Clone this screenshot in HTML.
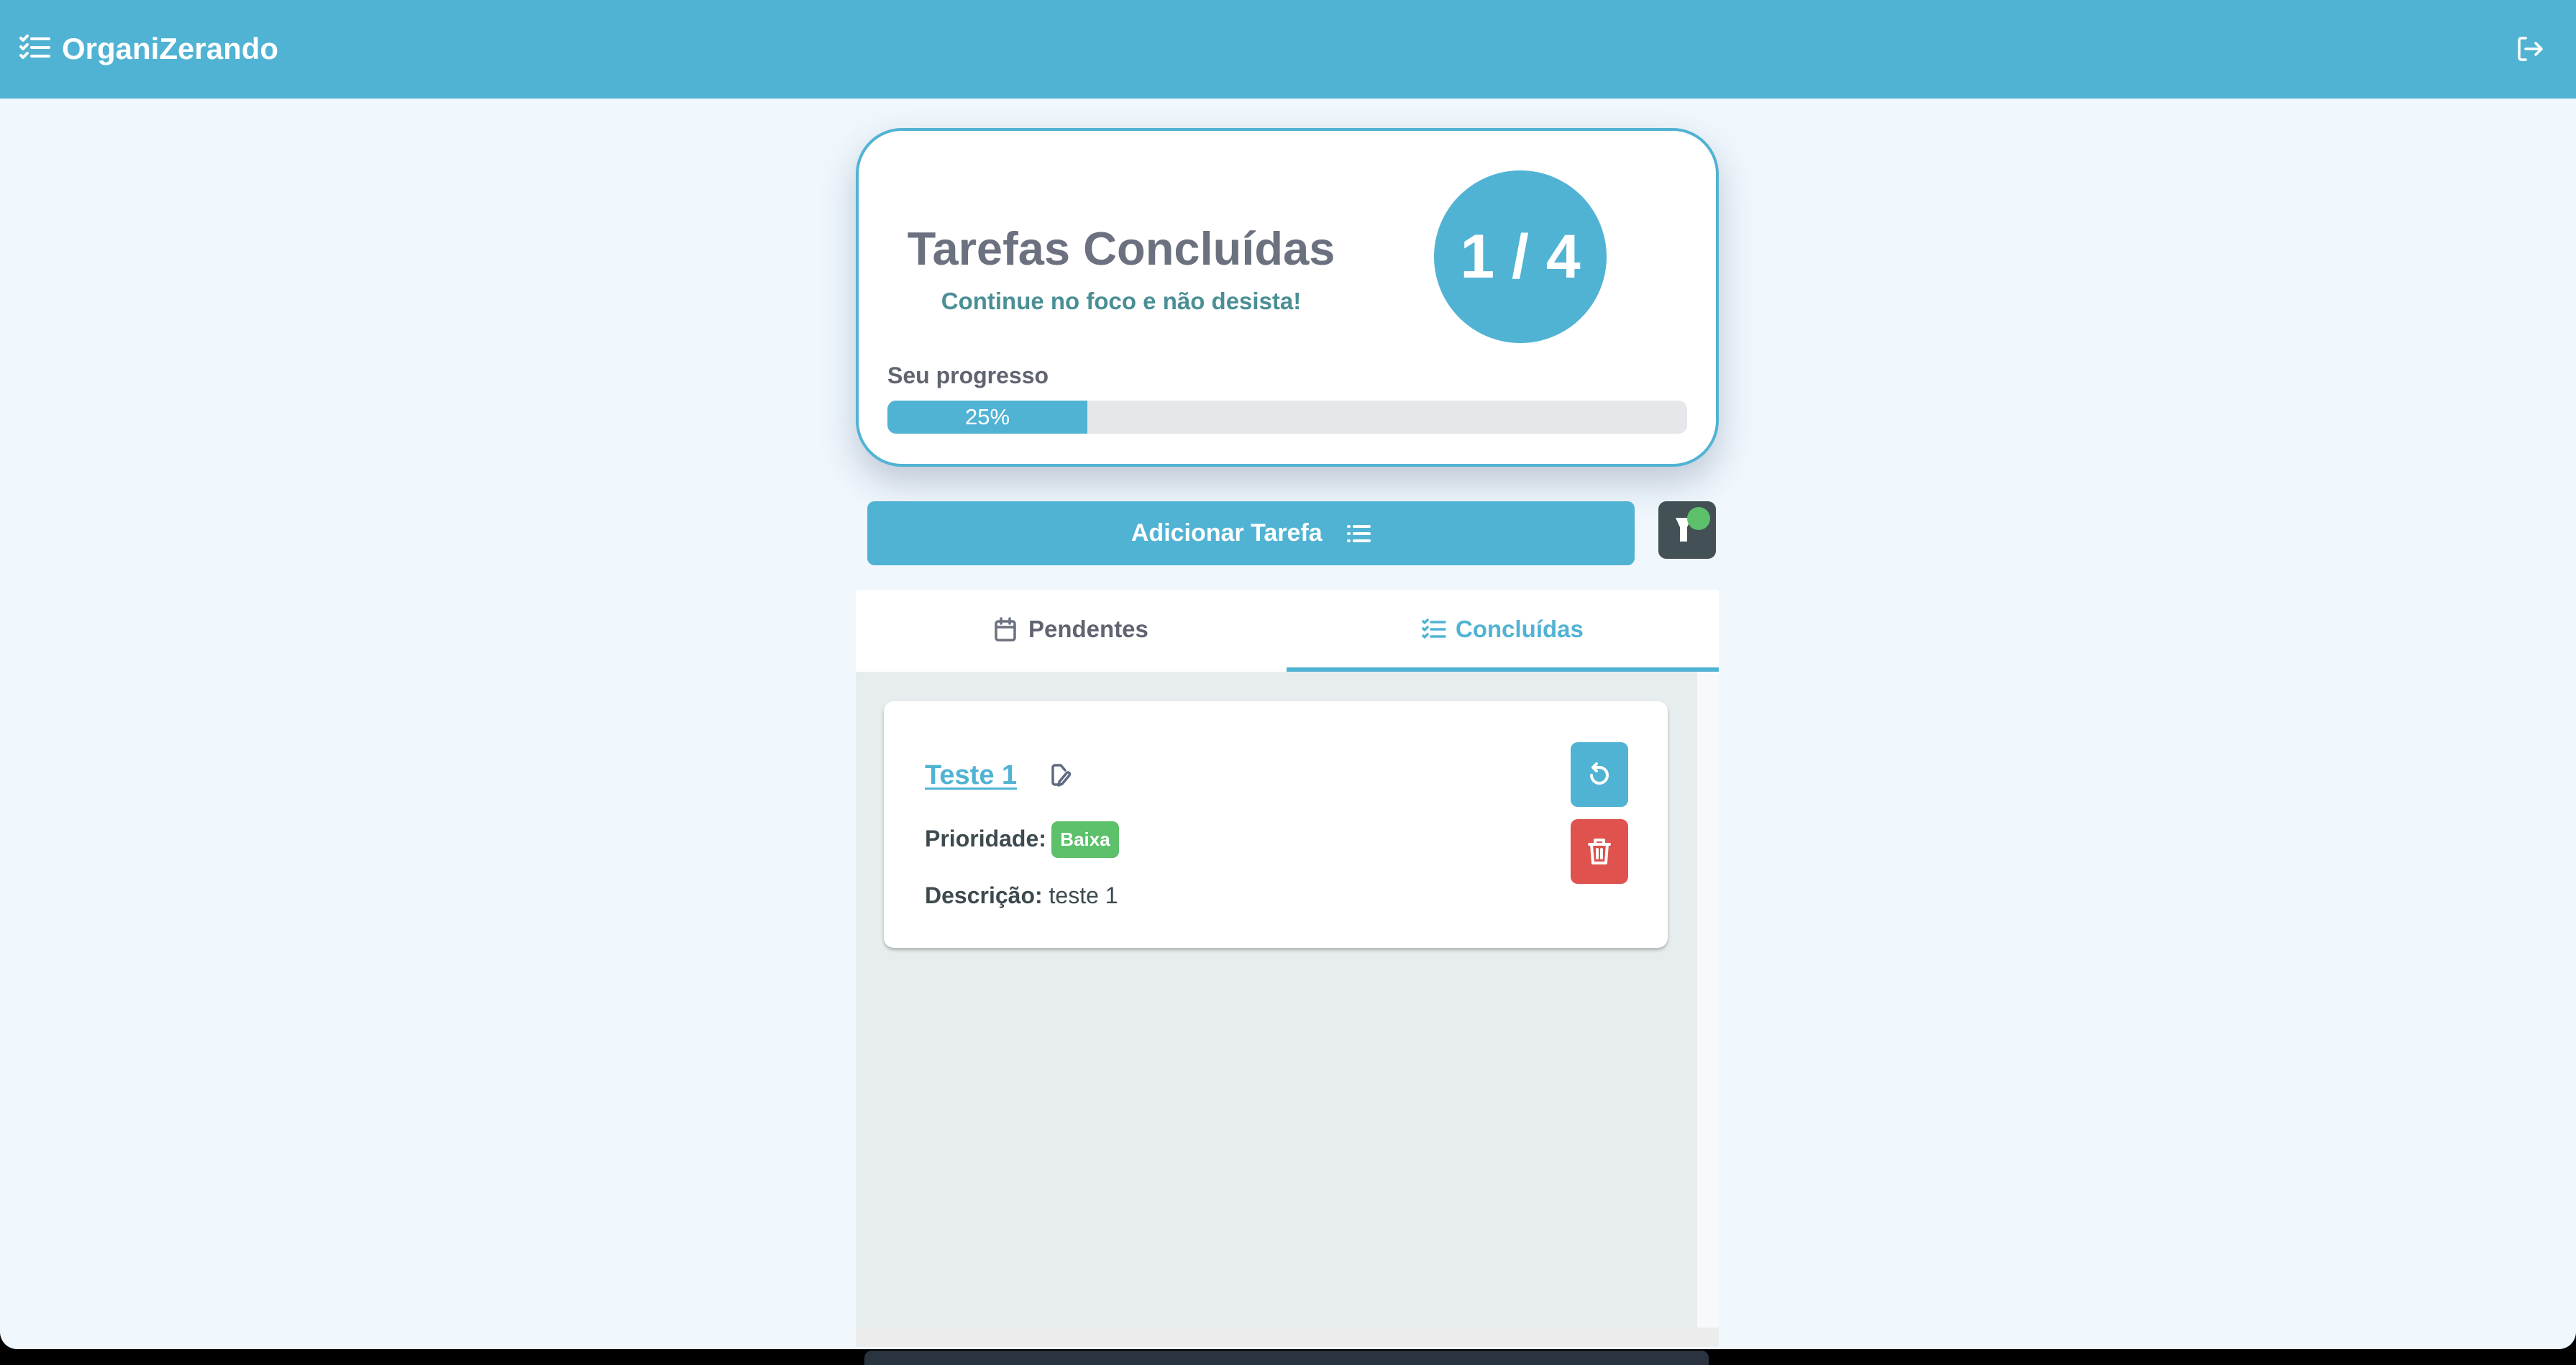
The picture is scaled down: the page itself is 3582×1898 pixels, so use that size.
<!DOCTYPE html>
<html><head><meta charset="utf-8"><style>
*{box-sizing:border-box;margin:0;padding:0}
body{width:3582px;height:1892px;overflow:hidden;background:#000;font-family:"Liberation Sans",sans-serif;position:relative}
.page{position:absolute;left:0;top:0;width:3582px;height:1876px;background:#f0f7fd;border-radius:0 0 24px 24px;overflow:hidden}
.hdr{position:absolute;left:0;top:0;width:3582px;height:137px;background:#51b3d3}
.abs{position:absolute}
.card{position:absolute;left:1190px;top:178px;width:1200px;height:471px;background:#fff;border:4px solid #51b3d3;border-radius:64px;box-shadow:0 22px 50px rgba(60,80,110,.28)}
</style></head><body>
<div class="page">
<div class="hdr">
 <svg class="abs" style="left:26px;top:48px" width="46" height="36" viewBox="0 0 46 36" fill="none" stroke="#fff" stroke-width="4" stroke-linecap="round" stroke-linejoin="round">
  <path d="M3 5l3 3 6-6M3 17l3 3 6-6M3 29l3 3 6-6"/><path d="M18 6h24M18 18h24M18 30h24"/></svg>
 <div class="abs" style="left:86px;top:44px;font-size:42px;font-weight:bold;color:#fff">OrganiZerando</div>
 <svg class="abs" style="left:3500px;top:50px" width="38" height="36" viewBox="0 0 38 36" fill="none" stroke="#fff" stroke-width="3.5" stroke-linecap="round" stroke-linejoin="round">
  <path d="M12 3H6a3 3 0 0 0-3 3v24a3 3 0 0 0 3 3h6"/><path d="M12 18h22M26 10l8 8-8 8"/></svg>
</div>

<div class="card">
 <div class="abs" style="left:0;width:730px;top:126px;text-align:center;font-size:65px;font-weight:bold;color:#6c7180">Tarefas Concluídas</div>
 <div class="abs" style="left:0;width:730px;top:218px;text-align:center;font-size:33px;font-weight:bold;color:#4a8f94">Continue no foco e não desista!</div>
 <div class="abs" style="left:800px;top:55px;width:240px;height:240px;border-radius:50%;background:#51b3d3;color:#fff;font-size:86px;font-weight:bold;text-align:center;line-height:240px">1 / 4</div>
 <div class="abs" style="left:40px;top:322px;font-size:32px;font-weight:bold;color:#5f6470">Seu progresso</div>
 <div class="abs" style="left:40px;top:375px;width:1112px;height:46px;border-radius:12px;background:#e5e7eb;overflow:hidden">
  <div style="width:278px;height:46px;background:#51b3d3;color:#fff;font-size:31px;text-align:center;line-height:46px">25%</div></div>
</div>

<div class="abs" style="left:1206px;top:697px;width:1067px;height:89px;background:#51b3d3;border-radius:10px;color:#fff;font-size:34px;font-weight:bold;text-align:center;line-height:89px">Adicionar Tarefa
 <svg style="vertical-align:-4px;margin-left:24px" width="34" height="28" viewBox="0 0 34 28" fill="none" stroke="#fff" stroke-width="4" stroke-linecap="round"><path d="M3 4h1M3 14h1M3 24h1M11 4h21M11 14h21M11 24h21"/></svg></div>
<div class="abs" style="left:2306px;top:697px;width:80px;height:80px;background:#435055;border-radius:11px">
 <svg class="abs" style="left:0;top:0" width="80" height="80" viewBox="0 0 80 80"><path d="M24 23h22l-6 13v20h-10v-20z" fill="#fff"/><circle cx="56" cy="24" r="16" fill="#5cc16a"/></svg></div>

<div class="abs" style="left:1190px;top:820px;width:1200px;height:114px;background:#fff"></div>
<svg class="abs" style="left:1383px;top:858px" width="30" height="34" viewBox="0 0 30 34" fill="none" stroke="#6c7180" stroke-width="3.5" stroke-linecap="round" stroke-linejoin="round"><rect x="2" y="6" width="26" height="26" rx="3"/><path d="M2 14h26M9 2v7M21 2v7"/></svg>
<div class="abs" style="left:1430px;top:856px;font-size:33px;font-weight:bold;color:#5f6470">Pendentes</div>
<svg class="abs" style="left:1977px;top:860px" width="34" height="30" viewBox="0 0 34 30" fill="none" stroke="#51b3d3" stroke-width="3.5" stroke-linecap="round" stroke-linejoin="round"><path d="M2 4l2 2 4-4M2 14l2 2 4-4M2 24l2 2 4-4M13 5h19M13 15h19M13 25h19"/></svg>
<div class="abs" style="left:2024px;top:856px;font-size:33px;font-weight:bold;color:#51b3d3">Concluídas</div>
<div class="abs" style="left:1789px;top:928px;width:601px;height:6px;background:#51b3d3"></div>

<div class="abs" style="left:1190px;top:934px;width:1200px;height:939px;background:#ececec"></div>
<div class="abs" style="left:1190px;top:934px;width:1170px;height:912px;background:#e7edee"></div>
<div class="abs" style="left:2360px;top:934px;width:30px;height:912px;background:#f7f9fa"></div>

<div class="abs" style="left:1229px;top:975px;width:1090px;height:343px;background:#fff;border-radius:14px;box-shadow:0 3px 5px rgba(0,0,0,.25)">
 <div class="abs" style="left:57px;top:82px;font-size:38px;font-weight:bold;color:#51b3d3;text-decoration:underline;text-underline-offset:5px">Teste 1</div>
 <svg class="abs" style="left:232px;top:87px" width="30" height="32" viewBox="0 0 30 32" fill="none" stroke="#5f6a80" stroke-width="3.5" stroke-linecap="round" stroke-linejoin="round"><path d="M12 29H6a3 3 0 0 1-3-3V5a3 3 0 0 1 3-3h8l6 7"/><path d="M16 28l10-12a2.5 2.5 0 0 0-4-3L12 25l-1 5z"/></svg>
 <div class="abs" style="left:57px;top:173px;font-size:32px;font-weight:bold;color:#3d4a4f">Prioridade:</div>
 <div class="abs" style="left:233px;top:167px;width:94px;height:51px;background:#5cc16a;border-radius:9px;color:#fff;font-size:26px;font-weight:bold;text-align:center;line-height:51px">Baixa</div>
 <div class="abs" style="left:57px;top:252px;font-size:32px;color:#3d4a4f"><b>Descrição:</b> teste 1</div>
 <div class="abs" style="left:955px;top:57px;width:80px;height:90px;background:#51b3d3;border-radius:10px">
  <svg class="abs" style="left:22px;top:25px" width="36" height="40" viewBox="0 0 36 40" fill="none" stroke="#fff" stroke-width="4" stroke-linecap="round" stroke-linejoin="round"><path d="M14 5l-5 5 5 5"/><path d="M10 10h8a11 11 0 1 1-11 11"/></svg></div>
 <div class="abs" style="left:955px;top:164px;width:80px;height:90px;background:#e0524d;border-radius:10px">
  <svg class="abs" style="left:24px;top:26px" width="32" height="38" viewBox="0 0 32 38" fill="none" stroke="#fff" stroke-width="4" stroke-linecap="round" stroke-linejoin="round"><path d="M2 9h28M10 9V3h12v6M5 9l2 26h18l2-26M13 16v12M19 16v12"/></svg></div>
</div>
</div>
<div class="abs" style="left:1202px;top:1878px;width:1174px;height:20px;background:#2a3440;border-radius:10px 10px 0 0"></div>
</body></html>
